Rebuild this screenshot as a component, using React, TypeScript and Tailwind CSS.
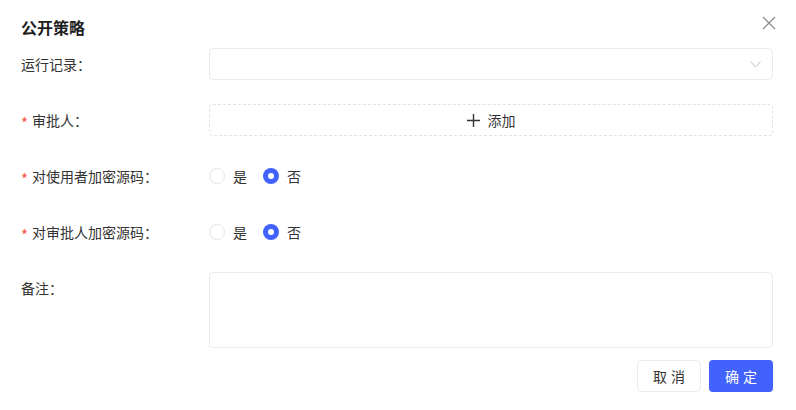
import React from "react";

const font = { fontFamily: '"Noto Sans CJK SC", "Noto Sans", sans-serif' };

function Label({ text, required }: { text: string; required?: boolean }) {
  return (
    <div className="w-[188px] h-8 flex items-center text-[14px] text-[#333333] shrink-0">
      {required && (
        <span className="text-[#ff4d4f] mr-[4px] text-[15px] leading-none translate-y-[2px]">*</span>
      )}
      <span>{text}：</span>
    </div>
  );
}

function Radio({ checked, label }: { checked?: boolean; label: string }) {
  return (
    <label className="flex items-center mr-[16px]">
      {checked ? (
        <span className="w-4 h-4 rounded-full bg-[#4162fd] flex items-center justify-center">
          <span className="w-[6px] h-[6px] rounded-full bg-white" />
        </span>
      ) : (
        <span className="w-4 h-4 rounded-full border border-[#e6e6e6] bg-white" />
      )}
      <span className="ml-2 text-[14px] text-[#333333]">{label}</span>
    </label>
  );
}

export default function App() {
  return (
    <div className="w-[796px] h-[410px] bg-white relative pl-[21px] pr-[23px]" style={font}>
      <div className="h-[48px] flex items-start pt-[15px]">
        <h1 className="text-[16px] leading-6 font-bold text-[#1f1f1f]">公开策略</h1>
      </div>
      <button className="absolute right-[20px] top-[16px] w-[14px] h-[14px] flex items-center justify-center text-[#8c8c8c]">
        <svg width="14" height="14" viewBox="0 0 14 14" fill="none" stroke="currentColor" strokeWidth="1.3">
          <path d="M1 1 L13 13 M13 1 L1 13" />
        </svg>
      </button>

      <div className="flex mb-6">
        <Label text="运行记录" />
        <div className="flex-1 h-8 rounded-[4px] border border-[#ebebeb] flex items-center justify-end pr-[11px]">
          <svg width="11" height="7" viewBox="0 0 11 7" fill="none" stroke="#bfbfbf" strokeWidth="1">
            <path d="M0.5 0.5 L5.5 6 L10.5 0.5" />
          </svg>
        </div>
      </div>

      <div className="flex mb-6">
        <Label text="审批人" required />
        <div className="flex-1 h-8 rounded-[4px] border border-dashed border-[#e3e3e3] flex items-center justify-center text-[14px] text-[#333333]">
          <svg width="13" height="13" viewBox="0 0 13 13" fill="none" stroke="#333333" strokeWidth="1.4" className="mr-[8px]">
            <path d="M6.5 0 V13 M0 6.5 H13" />
          </svg>
          <span>添加</span>
        </div>
      </div>

      <div className="flex mb-6">
        <Label text="对使用者加密源码" required />
        <div className="flex-1 h-8 flex items-center">
          <Radio label="是" />
          <Radio label="否" checked />
        </div>
      </div>

      <div className="flex mb-6">
        <Label text="对审批人加密源码" required />
        <div className="flex-1 h-8 flex items-center">
          <Radio label="是" />
          <Radio label="否" checked />
        </div>
      </div>

      <div className="flex mb-3">
        <Label text="备注" />
        <div className="flex-1 h-[76px] rounded-[4px] border border-[#ebebeb]" />
      </div>

      <div className="flex justify-end gap-2">
        <button className="w-16 h-8 rounded-[4px] border border-[#ebebeb] bg-white text-[14px] text-[#333333] tracking-[4px] pl-[4px]">
          取消
        </button>
        <button className="w-16 h-8 rounded-[4px] bg-[#4162fd] text-[14px] text-white tracking-[4px] pl-[4px]">
          确定
        </button>
      </div>
    </div>
  );
}
